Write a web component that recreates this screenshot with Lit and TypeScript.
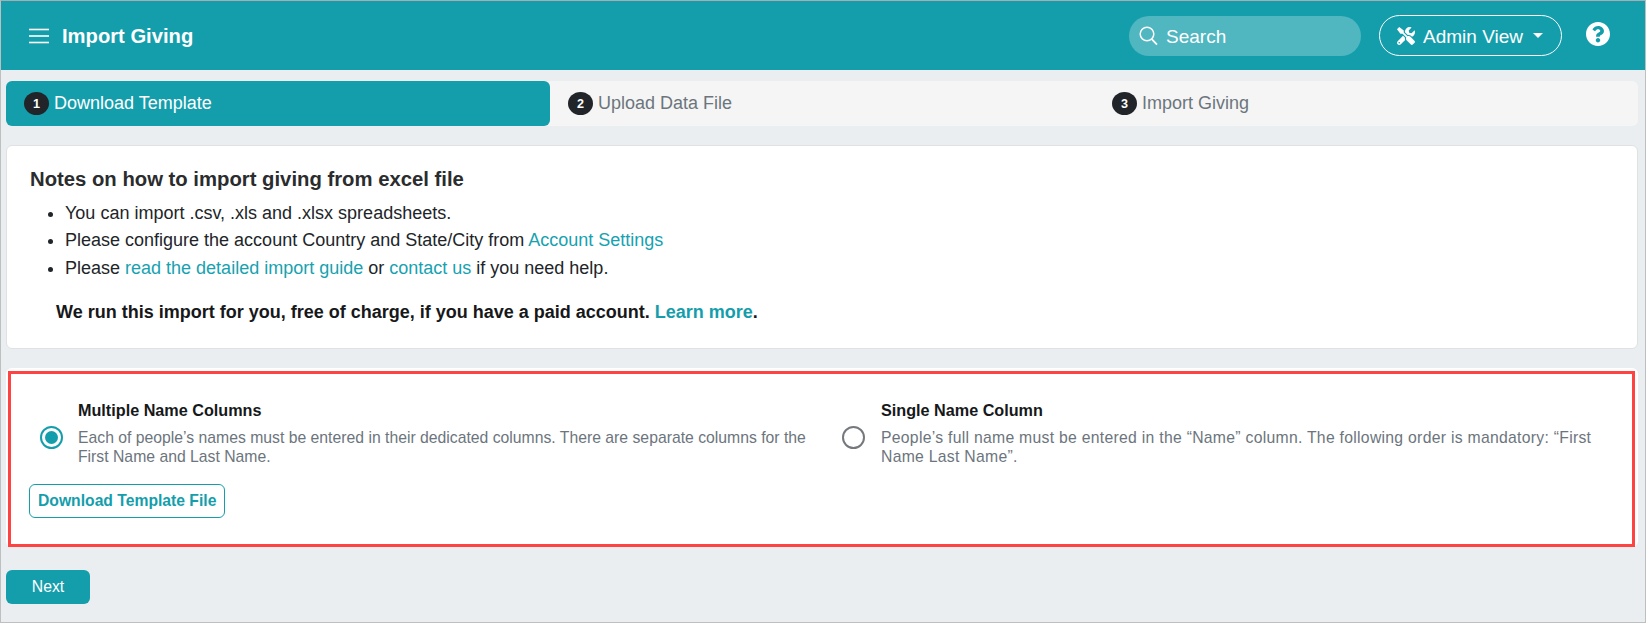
import { LitElement, html, css } from 'lit';
import { customElement } from 'lit/decorators.js';

const TOOLS = 'M501.1 395.7L384 278.6c-23.1-23.1-57.6-27.6-85.4-13.9L192 158.1V96L64 0 0 64l96 128h62.1l106.6 106.6c-13.6 27.8-9.2 62.3 13.9 85.4l117.1 117.1c14.6 14.6 38.2 14.6 52.7 0l52.7-52.7c14.5-14.6 14.5-38.2 0-52.7zM331.7 225c28.3 0 54.9 11 74.9 31l19.4 19.4c15.8-6.9 30.8-16.5 43.8-29.5 37.1-37.1 49.7-89.3 37.9-136.7-2.2-9-13.5-12.1-20.1-5.5l-74.4 74.4-67.9-11.3L334 98.9l74.4-74.4c6.6-6.6 3.4-17.9-5.7-20.2-47.4-11.7-99.6.9-136.6 37.9-28.5 28.5-41.9 66.1-41.2 103.6l82.1 82.1c8.1-1.9 16.5-2.9 24.7-2.9zm-103.9 82l-56.7-56.7L18.7 402.8c-25 25-25 65.5 0 90.5s65.5 25 90.5 0l123.6-123.6c-7.6-19.9-9.9-41.6-5-62.7zM64 472c-13.2 0-24-10.8-24-24 0-13.3 10.7-24 24-24s24 10.7 24 24c0 13.2-10.7 24-24 24z';
const QUESTION = 'M504 256c0 136.997-111.043 248-248 248S8 392.997 8 256C8 119.083 119.043 8 256 8s248 111.083 248 248zM262.655 90c-54.497 0-89.255 22.957-116.549 63.758-3.536 5.286-2.353 12.415 2.715 16.258l34.699 26.31c5.205 3.947 12.621 3.008 16.665-2.122 17.864-22.658 30.113-35.797 57.303-35.797 20.429 0 45.698 13.148 45.698 32.958 0 14.976-12.363 22.667-32.534 33.976C247.128 238.528 216 254.941 216 296v4c0 6.627 5.373 12 12 12h56c6.627 0 12-5.373 12-12v-1.333c0-28.462 83.186-29.647 83.186-106.667 0-58.002-60.165-102-116.531-102zM256 338c-25.365 0-46 20.635-46 46 0 25.364 20.635 46 46 46s46-20.636 46-46c0-25.365-20.635-46-46-46z';

@customElement('app-root')
export class AppRoot extends LitElement {
    static styles = css`
        :host {
            display: block;
            box-sizing: border-box;
            height: 623px;
            border: 1px solid #bdbfc1;
            border-top-color: #a9adb3;
            background: #ebeef0;
            font-family: 'Liberation Sans', Arial, sans-serif;
            color: #212529;
            overflow: hidden;
        }
        a { color: #17a2b0; text-decoration: none; }

        .header {
            height: 69px;
            background: #149eac;
            color: #fff;
            display: flex;
            align-items: center;
            padding: 0 35px 0 28px;
        }
        .burger { width: 20px; height: 16px; margin-right: 13px; flex: none; display: block; }
        .title { font-size: 20.2px; font-weight: 700; flex: 1; padding-top: 2px; }
        .search {
            width: 232px;
            height: 40px;
            border-radius: 20px;
            background: #50b6c0;
            display: flex;
            align-items: center;
            gap: 8px;
            padding-left: 10px;
            box-sizing: border-box;
            font-size: 19px;
            margin-right: 18px;
        }
        .admin {
            width: 183px;
            height: 41px;
            box-sizing: border-box;
            border: 1px solid #fff;
            border-radius: 21px;
            display: flex;
            align-items: center;
            padding-left: 17px;
            gap: 8px;
            font-size: 19px;
            margin-right: 24px;
        }
        .search span, .admin span { padding-top: 2px; }
        .caret {
            width: 0;
            height: 0;
            margin-left: 2px;
            border: 5px solid transparent;
            border-top: 5px solid #fff;
            border-bottom: 0;
        }
        .help { display: block; flex: none; margin-top: -4px; }

        .main { padding: 11px 7px 0 5px; }

        .steps {
            display: grid;
            grid-template-columns: repeat(3, 1fr);
            height: 45px;
            background: #f5f5f5;
            border-radius: 6px;
        }
        .step {
            display: flex;
            align-items: center;
            gap: 5px;
            padding-left: 18px;
            font-size: 18px;
            color: #6c757d;
            border-radius: 6px;
        }
        .step.active { background: #149eac; color: #fff; }
        .num {
            width: 25px;
            height: 23px;
            border-radius: 50%;
            background: #212529;
            color: #fff;
            font-size: 12.6px;
            font-weight: 700;
            display: flex;
            align-items: center;
            justify-content: center;
            flex: none;
        }

        .notes {
            margin-top: 19px;
            height: 204px;
            box-sizing: border-box;
            background: #fff;
            border: 1px solid #dfe1e3;
            border-radius: 6px;
            padding: 21px 23px 0;
            font-size: 18px;
        }
        .notes h2 { margin: 0; font-size: 20.3px; line-height: 24px; font-weight: 700; color: #2a2c2e; }
        .notes ul { margin: 9px 0 0; padding: 0 0 0 35px; }
        .notes li { line-height: 27.3px; }
        .paid { margin: 17px 0 0 26px; font-weight: 700; line-height: 27px; color: #16181a; }
        .paid a { color: #149eac; }

        .panel {
            margin-top: 19px;
            height: 179px;
            box-sizing: border-box;
            background: #fff;
            border-radius: 6px;
            padding: 3px 3px 0 2px;
        }
        .outline {
            height: 176px;
            box-sizing: border-box;
            border: 3px solid #ff4343;
            padding: 24px 17px 0 18px;
        }
        .options { display: grid; grid-template-columns: 802px 1fr; }
        .option { display: flex; align-items: center; gap: 15px; padding-right: 10px; }
        .option.second { gap: 16px; }
        .option .label { font-size: 16.2px; font-weight: 700; color: #16181a; line-height: 24px; }
        .option .desc { font-size: 15.75px; line-height: 19px; color: #6c757d; margin-top: 6px; }
        .option.second .desc { letter-spacing: 0.28px; }
        .radio {
            width: 23px;
            height: 23px;
            box-sizing: border-box;
            border: 2.5px solid #75797d;
            border-radius: 50%;
            flex: none;
            margin: 10px 0 0 11px;
            display: flex;
            align-items: center;
            justify-content: center;
        }
        .radio.on { border-color: #149eac; }
        .radio.on::after {
            content: '';
            width: 13px;
            height: 13px;
            border-radius: 50%;
            background: #149eac;
        }
        .text { flex: 1; }
        .download {
            display: inline-flex;
            align-items: center;
            margin-top: 18px;
            height: 34px;
            box-sizing: border-box;
            padding: 0 8px;
            background: #fff;
            border: 1px solid #149eac;
            border-radius: 6px;
            color: #149eac;
            font: 700 15.7px 'Liberation Sans', Arial, sans-serif;
        }
        .next {
            display: flex;
            align-items: center;
            justify-content: center;
            margin: 23px 0 0 0;
            width: 84px;
            height: 34px;
            background: #149eac;
            color: #fff;
            border: 0;
            border-radius: 6px;
            font: 15.75px 'Liberation Sans', Arial, sans-serif;
        }
    `;

    render() {
        return html`
            <div class="header">
                <svg class="burger" viewBox="0 0 20 16" fill="#fff">
                    <rect y="0.7" width="20" height="1.6"></rect>
                    <rect y="7.2" width="20" height="1.6"></rect>
                    <rect y="13.7" width="20" height="1.6"></rect>
                </svg>
                <div class="title">Import Giving</div>
                <div class="search">
                    <svg width="19" height="20" viewBox="0 0 19 20" fill="none" stroke="#fff">
                        <circle cx="8" cy="8" r="6.8" stroke-width="1.5"></circle>
                        <path d="M12.8 13.2L18 18.6" stroke-width="1.8"></path>
                    </svg>
                    <span>Search</span>
                </div>
                <div class="admin">
                    <svg width="18" height="18" viewBox="0 0 512 512" fill="#fff"><path d=${TOOLS}></path></svg>
                    <span>Admin View</span>
                    <i class="caret"></i>
                </div>
                <svg class="help" width="24" height="24" viewBox="8 8 496 496" fill="#fff"><path d=${QUESTION}></path></svg>
            </div>
            <div class="main">
                <div class="steps">
                    <div class="step active"><span class="num">1</span>Download Template</div>
                    <div class="step"><span class="num">2</span>Upload Data File</div>
                    <div class="step"><span class="num">3</span>Import Giving</div>
                </div>
                <div class="notes">
                    <h2>Notes on how to import giving from excel file</h2>
                    <ul>
                        <li>You can import .csv, .xls and .xlsx spreadsheets.</li>
                        <li>Please configure the account Country and State/City from <a href="#">Account Settings</a></li>
                        <li>Please <a href="#">read the detailed import guide</a> or <a href="#">contact us</a> if you need help.</li>
                    </ul>
                    <p class="paid">We run this import for you, free of charge, if you have a paid account. <a href="#">Learn more</a>.</p>
                </div>
                <div class="panel">
                    <div class="outline">
                        <div class="options">
                            <div class="option">
                                <span class="radio on"></span>
                                <div class="text">
                                    <div class="label">Multiple Name Columns</div>
                                    <div class="desc">Each of people’s names must be entered in their dedicated columns. There are separate columns for the First Name and Last Name.</div>
                                </div>
                            </div>
                            <div class="option second">
                                <span class="radio"></span>
                                <div class="text">
                                    <div class="label">Single Name Column</div>
                                    <div class="desc">People’s full name must be entered in the “Name” column. The following order is mandatory: “First Name Last Name”.</div>
                                </div>
                            </div>
                        </div>
                        <button class="download">Download Template File</button>
                    </div>
                </div>
                <button class="next">Next</button>
            </div>
        `;
    }
}
